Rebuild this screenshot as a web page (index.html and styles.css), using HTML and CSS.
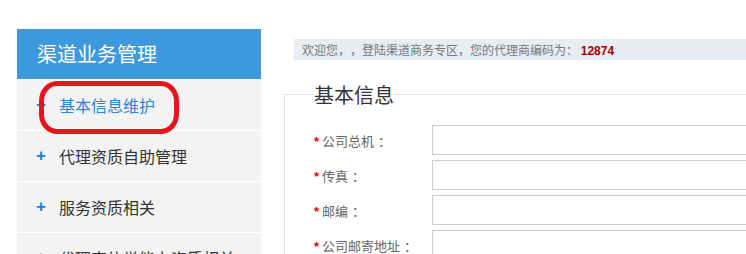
FILE: index.html
```html
<!DOCTYPE html>
<html lang="zh-CN">
<head>
    <meta charset="UTF-8">
    <title>渠道业务管理</title>
    <link rel="stylesheet" href="styles.css">
</head>
<body>
    <div class="page">
        <div class="sidebar">
            <div class="sidebar-title">渠道业务管理</div>
            <ul class="menu">
                <li class="menu-item active"><span class="plus">+</span>基本信息维护</li>
                <li class="menu-item"><span class="plus">+</span>代理资质自助管理</li>
                <li class="menu-item"><span class="plus">+</span>服务资质相关</li>
                <li class="menu-item"><span class="plus">+</span>代理商信誉能力资质相关</li>
            </ul>
            <!-- hand-drawn highlight around the current item -->
            <div class="mark"></div>
        </div>

        <div class="main">
            <div class="welcome">欢迎您，，登陆渠道商务专区，您的代理商编码为： <b class="code">12874</b></div>

            <fieldset class="info-box">
                <legend>基本信息</legend>
                <div class="form-row">
                    <label><span class="req">*</span>公司总机<span class="colon">：</span></label>
                    <input type="text">
                </div>
                <div class="form-row">
                    <label><span class="req">*</span>传真<span class="colon">：</span></label>
                    <input type="text">
                </div>
                <div class="form-row">
                    <label><span class="req">*</span>邮编<span class="colon">：</span></label>
                    <input type="text">
                </div>
                <div class="form-row">
                    <label><span class="req">*</span>公司邮寄地址<span class="colon">：</span></label>
                    <input type="text">
                </div>
            </fieldset>
        </div>
    </div>
</body>
</html>
```

FILE: styles.css
```css
body {
    margin: 0;
    overflow: hidden;
    font-family: "Noto Sans CJK SC", "Liberation Sans", sans-serif;
    text-spacing-trim: space-all;
    background: #fff;
}

.page {
    display: flex;
    align-items: flex-start;
}

.sidebar {
    position: relative;
    flex: none;
    width: 244px;
    margin: 29px 0 0 17px;
    background: #fff;
}

.sidebar-title {
    height: 50px;
    line-height: 50px;
    padding-left: 20px;
    margin-bottom: 1px;
    background: #3d98de;
    color: #fff;
    font-size: 20px;
}

.menu {
    list-style: none;
    margin: 0;
    padding: 0;
}

.menu-item {
    display: flex;
    align-items: center;
    height: 50px;
    padding-left: 19px;
    border-bottom: 1px solid #fff;
    background: #f3f3f3;
    color: #333;
    font-size: 16px;
}

.menu-item.active {
    color: #2a85d6;
}

.plus {
    width: 22px;
    margin-right: 1px;
    color: #1b7fd4;
    font-family: "Liberation Sans", sans-serif;
    font-weight: bold;
    font-size: 17px;
}

.mark {
    position: absolute;
    left: 22px;
    top: 52px;
    width: 130px;
    height: 43px;
    border: 5px solid #e8141c;
    border-radius: 18px / 20px;
}

.main {
    flex: none;
    width: 600px;
    margin-left: 23px;
    padding-top: 39px;
}

.welcome {
    height: 21px;
    line-height: 21px;
    margin-left: 10px;
    padding-left: 8px;
    background: #e8edf4;
    color: #777;
    font-size: 12px;
}

.code {
    color: #a00000;
    font-family: "Liberation Sans", sans-serif;
    font-size: 12px;
}

.info-box {
    margin: 20px 0 0;
    padding: 16px 0 0 29px;
    border: 1px solid #e2e2e2;
    border-right: none;
    border-bottom: none;
}

.info-box legend {
    padding: 0;
    color: #333;
    font-size: 20px;
}

.form-row {
    display: flex;
    align-items: center;
    margin-bottom: 5px;
}

.form-row label {
    width: 118px;
    color: #666;
    font-size: 13px;
}

.colon {
    margin-left: 4px;
}

.req {
    color: #e00;
    margin-right: 3px;
    font-family: "Liberation Sans", sans-serif;
    font-weight: bold;
}

.form-row input {
    width: 400px;
    height: 30px;
    padding: 0 6px;
    border: 1px solid #ccc;
    box-sizing: border-box;
}
```
